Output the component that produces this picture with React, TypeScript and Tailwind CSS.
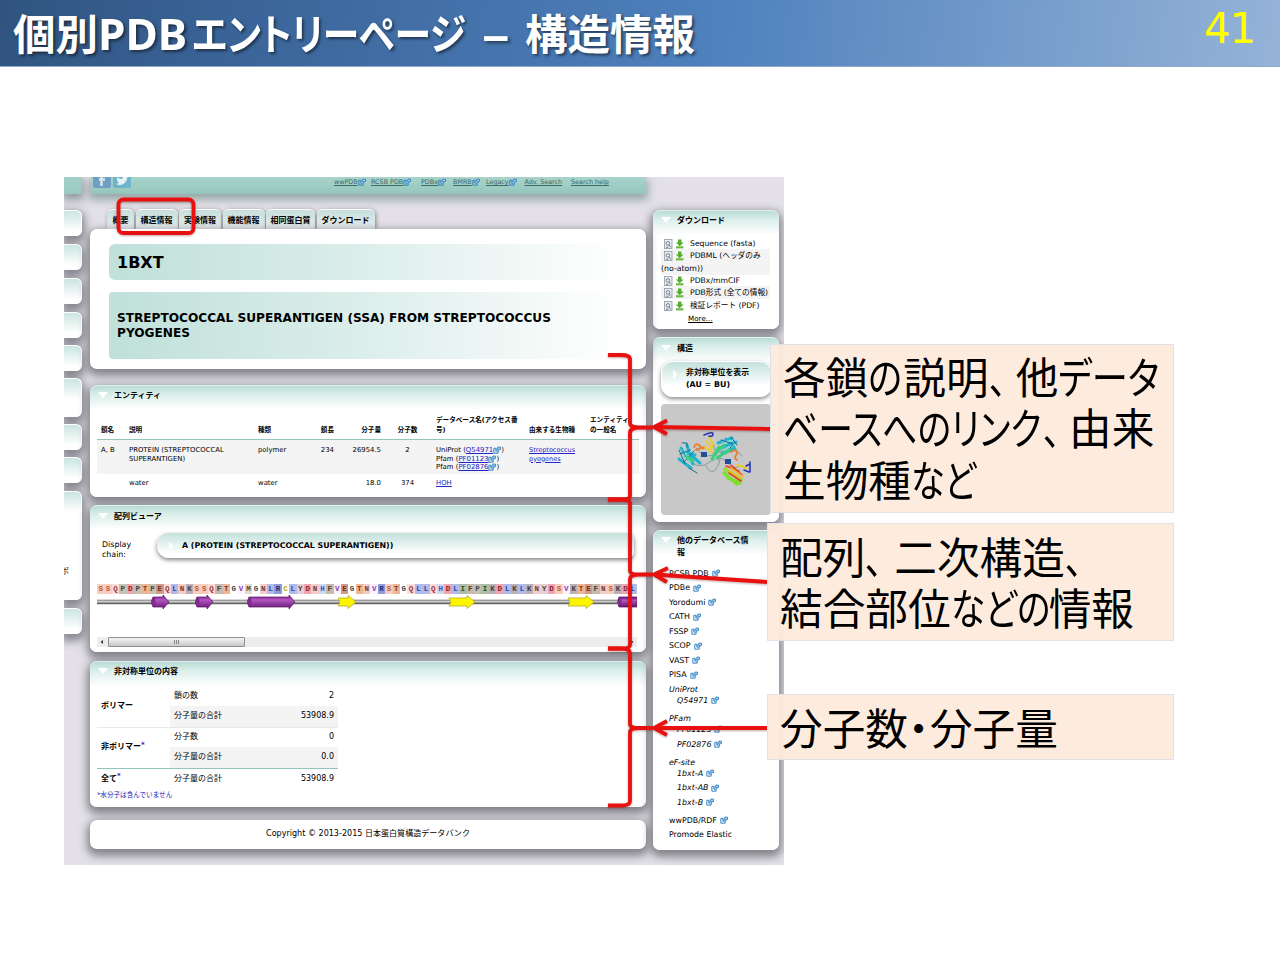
import React from "react";

const FONT = "font-['DejaVu_Sans','Noto_Sans_CJK_JP',sans-serif]";
const SLIDE_FONT = "font-['Noto_Sans','Noto_Sans_CJK_JP',sans-serif]";
const PANEL = "shrink-0 rounded-[7px] bg-white shadow-[0_4px_9px_3px_rgba(70,70,78,0.6)]";
const HEADED = "bg-[linear-gradient(to_bottom,#b9dcd5_0px,#dcefeb_9px,#ffffff_24px)] border-t border-[#dff1ee]";

function Ext({ className = "" }: { className?: string }) {
  return (
    <svg className={`inline-block h-[8px] w-[8px] shrink-0 ${className}`} viewBox="0 0 14 14" fill="none" stroke="#2c7fc4" strokeWidth="1.7">
      <path d="M6 4H1.5V12.500H9V10" />
      <path d="M5 9V5.500H8.500V2H13V6H10V9Z" fill="#cfe6f8" />
    </svg>
  );
}

function Heading({ children, className = "" }: { children: React.ReactNode; className?: string }) {
  return (
    <div className={`flex items-start gap-[6px] pl-[8px] text-[8px] leading-[12px] font-bold ${className}`}>
      <svg className="mt-[2px] h-[6px] w-[10px] shrink-0" viewBox="0 0 10 6"><path d="M0 0H10L5 6Z" fill="#fff" /></svg>
      <span>{children}</span>
    </div>
  );
}

const STUBS = [
  "h-[26px]", "mt-[8px] h-[26px]", "mt-[8px] h-[26px]", "mt-[8px] h-[26px]", "mt-[7px] h-[26px]",
  "mt-[7px] h-[39px]", "mt-[7px] h-[26px]", "mt-[7px] h-[26px]", "mt-[8px] h-[109px]", "mt-[8px] h-[26px]",
];

function LeftColumn() {
  return (
    <div className="flex w-[18px] shrink-0 flex-col">
      <div className="h-[17px] shrink-0 bg-gradient-to-b from-[#a3d0c8] to-[#9bcac1] shadow-[0_4px_8px_2px_rgba(90,110,110,0.6)]" />
      <div className="mt-[16px] flex flex-col">
        {STUBS.map((s, i) => (
          <div key={i} className={`${s} shrink-0 rounded-r-[6px] border-t border-r border-white bg-[linear-gradient(to_bottom,#cbe5e0_0px,#ffffff_20px)] shadow-[0_4px_8px_3px_rgba(75,75,85,0.6)]`}>
            {i === 8 && <div className="flex w-[5px] justify-end overflow-hidden pt-[74px] text-[8px] leading-[12px]"><span>ポ</span></div>}
          </div>
        ))}
      </div>
    </div>
  );
}

const LINKS: [string, boolean, string][] = [
  ["wwPDB", true, "w-[37px]"], ["RCSB PDB", true, "w-[50px]"], ["PDBe", true, "w-[32px]"], ["BMRB", true, "w-[33px]"],
  ["Legacy", true, "w-[38.5px]"], ["Adv. Search", false, "w-[46.5px]"], ["Search help", false, "w-[45px]"],
];

function TopBand() {
  return (
    <div className="ml-[1px] flex h-[17px] shrink-0 items-start bg-gradient-to-b from-[#a8d3cb] to-[#94c6bc] shadow-[0_4px_8px_2px_rgba(90,120,116,0.55)]">
      <div className="flex h-[12px] w-[243px] gap-[2px] pl-[2px]">
        <svg className="h-[11px] w-[18px]" viewBox="0 0 18 11"><path d="M0 0H18V9Q18 11 16 11H2Q0 11 0 9Z" fill="#6e9fc0" /><path d="M8.5 9V0M6 2.5H12" stroke="#d7e9ee" strokeWidth="2.4" /></svg>
        <svg className="h-[11px] w-[18px]" viewBox="0 0 18 11"><path d="M0 0H18V9Q18 11 16 11H2Q0 11 0 9Z" fill="#6fb4ca" /><path d="M3 7Q7 9 10 7Q14 5 14 1L15 0H10L9 2Q6 2 4 0V3L5 5Q6 6 6 6Z" fill="#e6f3f5" /></svg>
      </div>
      {LINKS.map(([t, ext, w]) => (
        <div key={t} className={`${w} flex items-center text-[6.4px] leading-[10px] whitespace-nowrap text-[#3f6a66]`}>
          <span className="underline">{t}</span>{ext && <Ext />}
        </div>
      ))}
    </div>
  );
}

const TABS: [string, string][] = [
  ["概要", "w-[27px]"], ["構造情報", "w-[42px]"], ["実験情報", "w-[42px]"], ["機能情報", "w-[42px]"], ["相同蛋白質", "w-[49px]"], ["ダウンロード", "w-[58px]"],
];

function Tabs() {
  return (
    <div className="mt-[15px] flex h-[20px] shrink-0 gap-[1.5px] pl-[17px]">
      {TABS.map(([t, w]) => (
        <div key={t} className={`${w} flex items-center justify-center rounded-t-[6px] border-t border-white bg-gradient-to-b from-[#c6dfdc] to-[#e9eeef] pt-[2px] text-[8px] font-bold whitespace-nowrap shadow-[1px_1px_4px_rgba(70,70,80,0.6)]`}>{t}</div>
      ))}
    </div>
  );
}

function TitlePanel() {
  const bar = "bg-gradient-to-r from-[#c0e0da] via-[#dceeeb] to-white flex items-center pl-[8px] font-bold";
  return (
    <div className={`${PANEL} relative flex h-[140px] flex-col pt-[15px] pl-[19px]`}>
      <div className={`${bar} h-[36px] w-[510px] rounded-l-[6px] pt-[1px] text-[16px]`}>1BXT</div>
      <div className={`${bar} mt-[12px] h-[67px] w-[510px] rounded-l-[4px] text-[12.130px] leading-[15px]`}>
        <div className="whitespace-nowrap">STREPTOCOCCAL SUPERANTIGEN (SSA) FROM STREPTOCOCCUS<br />PYOGENES</div>
      </div>
    </div>
  );
}

const COLS = "grid grid-cols-[28px_129px_48px_28px_47px_55px_93px_61px_48px] pl-[4px]";
const LINK = "text-[#2323c8] underline";

function EntityPanel() {
  const db: [string, string][] = [["UniProt", "Q54971"], ["Pfam", "PF01123"], ["Pfam", "PF02876"]];
  return (
    <div className={`${PANEL} ${HEADED} mt-[16px] flex h-[112px] flex-col`}>
      <Heading className="pt-[4px]">エンティティ</Heading>
      <div className="mx-[7px] mt-[12px] text-[6.900px]">
        <div className={`${COLS} h-[26px] items-end border-b border-[#94c4ba] pb-[4px] text-[6.6px] leading-[10px] font-bold whitespace-nowrap`}>
          <div>鎖名</div><div>説明</div><div>種類</div><div className="text-right">鎖長</div><div className="text-right">分子量</div>
          <div className="pr-[2px] text-center">分子数</div><div>データベース名(アクセス番<br />号)</div><div>由来する生物種</div><div>エンティティ<br />の一般名</div>
        </div>
        <div className={`${COLS} h-[34px] bg-[#f4f4f5] pt-[6px] leading-[8.5px]`}>
          <div>A, B</div><div>PROTEIN (STREPTOCOCCAL<br />SUPERANTIGEN)</div><div>polymer</div><div className="text-right">234</div><div className="text-right">26954.5</div>
          <div className="pr-[2px] text-center">2</div>
          <div>
            {db.map(([n, id]) => (
              <div key={id} className="flex h-[8.5px] items-center whitespace-nowrap">{n}&nbsp;(<span className={LINK}>{id}</span><Ext />)</div>
            ))}
          </div>
          <div className="text-[6.5px]"><span className={LINK}>Streptococcus<br />pyogenes</span></div><div />
        </div>
        <div className={`${COLS} h-[19px] items-center`}>
          <div /><div>water</div><div>water</div><div /><div className="text-right">18.0</div><div className="pr-[2px] text-center">374</div><div className={LINK}>HOH</div><div /><div />
        </div>
      </div>
    </div>
  );
}

const SEQ = "SSQPDPTPEQLNKSSQFTGVMGNLRCLYDNHFVEGTNVRSTGQLLQHDLIFPIKDLKLKNYDSVKTEFNSKDL";
const RESIDUE: Record<string, string> = {
  S: "bg-[#f9cdbd] text-[#b4573c]", T: "bg-[#f0b593] text-[#7a3d20]", Q: "bg-[#fbdcd8] text-[#9b3434]", P: "bg-[#c3c2b4] text-[#4a4640]",
  D: "bg-[#efa5b0] text-[#7c2430]", E: "bg-[#cf9c8c] text-[#6d2c20]", L: "bg-[#b0bbec] text-[#3844a4]", N: "bg-[#f4cdc6] text-[#7b3a34]",
  K: "bg-[#b9b0b8] text-[#4b3a44]", F: "bg-[#c9b8ae] text-[#4a4036]", G: "bg-white text-[#444]", V: "bg-[#fbf3fc] text-[#8d35b5]",
  M: "bg-[#e3dbc8] text-[#564b33]", R: "bg-[#8f9bd8] text-[#222a70]", C: "bg-white text-[#b5a800]", Y: "bg-[#e4d0d4] text-[#5c3a40]",
  H: "bg-[#cdd7f6] text-[#4656b6]", I: "bg-[#a9bfa6] text-[#2d4a2c]",
};

function Helix({ x, w, cut = false }: { x: number; w: number; cut?: boolean }) {
  const e = x + w;
  return (
    <g>
      <path d={cut ? `M${x + 2} 7H${e}V17H${x + 2}Q${x - 1} 12 ${x + 2} 7Z` : `M${x + 2} 7H${e - 6}V5L${e} 12L${e - 6} 19V17H${x + 2}Q${x - 1} 12 ${x + 2} 7Z`} fill="url(#helix)" stroke="#5b1266" strokeWidth=".7" />
      <ellipse cx={x + 2.5} cy="12" rx="2" ry="4.6" fill="#7d2a8a" />
    </g>
  );
}

function Strand({ x, w }: { x: number; w: number }) {
  const e = x + w;
  return <path d={`M${x} 8H${e - 8}V5.5L${e} 12L${e - 8} 18.5V16H${x}L${x + 2} 12Z`} fill="#fdf500" stroke="#b9ae1e" strokeWidth=".8" />;
}

function SequencePanel() {
  return (
    <div className={`${PANEL} ${HEADED} mt-[8px] flex h-[147px] flex-col`}>
      <Heading className="pt-[5px]">配列ビューア</Heading>
      <div className="mt-[7px] flex h-[36px] pl-[12px]">
        <div className="w-[54px] pt-[10px] text-[7.9px] leading-[10px]">Display<br />chain:</div>
        <div className="mt-[3px] ml-[1px] flex h-[25px] w-[477px] items-center gap-[8px] rounded-l-[12px] rounded-r-[6px] bg-gradient-to-b from-[#c3e1dc] to-white to-80% pl-[12px] text-[7.860px] font-bold whitespace-nowrap shadow-[0_2px_4px_rgba(60,60,60,0.65)]">
          <svg className="h-[8px] w-[5px]" viewBox="0 0 5 8"><path d="M0 0L5 4L0 8Z" fill="#fff" /></svg>
          A (PROTEIN (STREPTOCOCCAL SUPERANTIGEN))
        </div>
      </div>
      <div className="mt-[17.5px] ml-[7px] flex h-[10px] w-[540px] font-['Liberation_Mono',monospace] text-[7.5px] leading-[10px] font-bold">
        {SEQ.split("").map((c, i) => <span key={i} className={`${RESIDUE[c]} w-[7.4px] shrink-0 text-center`}>{c}</span>)}
      </div>
      <svg className="-mt-[4px] ml-[7px] h-[24px] w-[540px]" viewBox="0 0 540 24">
        <defs><linearGradient id="helix" x2="0" y2="1"><stop offset="0" stopColor="#6d1b7c" /><stop offset=".35" stopColor="#b455c2" /><stop offset="1" stopColor="#5f146c" /></linearGradient></defs>
        <path d="M0 12H520" stroke="#666" strokeWidth="4.4" /><path d="M0 11.6H520" stroke="#cfcfcf" strokeWidth="2" />
        <Helix x={54} w={18} /><Helix x={98} w={18} /><Helix x={150} w={48} />
        <Strand x={241} w={18} /><Strand x={352} w={26} /><Strand x={471} w={26} />
        <Helix x={520} w={20} cut />
      </svg>
      <div className="mt-[23px] ml-[7px] flex h-[10px] w-[540px] items-center bg-[#ededed]">
        <svg className="h-[10px] w-[11px]" viewBox="0 0 11 10"><path d="M6 3V7L3.5 5Z" fill="#333" /></svg>
        <div className="flex h-[10px] w-[137px] items-center justify-center gap-[1px] rounded-[1px] border border-[#8f8f8f] bg-gradient-to-b from-[#f5f5f5] to-[#c9c9c9]">
          <i className="h-[4px] w-px bg-[#888]" /><i className="h-[4px] w-px bg-[#888]" /><i className="h-[4px] w-px bg-[#888]" />
        </div>
        <svg className="ml-auto h-[10px] w-[8px]" viewBox="0 0 8 10"><path d="M2 3V7L4.5 5Z" fill="#333" /></svg>
      </div>
    </div>
  );
}

function ContentPanel() {
  const row = "flex h-[20.5px] items-center justify-between pr-[4px] pl-[4px]";
  const side = "flex w-[73px] items-center pl-[4px] font-bold";
  const star = <span className="-mt-[5px] text-[7px] text-[#2323a8]">*</span>;
  return (
    <div className={`${PANEL} ${HEADED} mt-[9px] flex h-[146px] flex-col text-[8px]`}>
      <Heading className="pt-[4px]">非対称単位の内容</Heading>
      <div className="mt-[7.5px] ml-[7px] w-[241px] leading-[10px]">
        <div className="flex border-b border-[#e8e8ea]">
          <div className={side}>ポリマー</div>
          <div className="flex-1"><div className={row}><span>鎖の数</span><span>2</span></div><div className={`${row} bg-[#f4f4f5]`}><span>分子量の合計</span><span>53908.9</span></div></div>
        </div>
        <div className="-mt-px flex border-b border-[#94c4ba]">
          <div className={side}>非ポリマー{star}</div>
          <div className="flex-1"><div className={row}><span>分子数</span><span>0</span></div><div className={`${row} bg-[#f4f4f5]`}><span>分子量の合計</span><span>0.0</span></div></div>
        </div>
        <div className="flex">
          <div className={side}>全て{star}</div>
          <div className={`${row} flex-1`}><span>分子量の合計</span><span>53908.9</span></div>
        </div>
        <div className="mt-[1px] text-[6.6px] text-[#2424b8]">*水分子は含んでいません</div>
      </div>
    </div>
  );
}

const DOWNLOADS: [string, string][] = [
  ["Sequence (fasta)", "h-[11px]"], ["PDBML (ヘッダのみ", "h-[13px] bg-[#f4f4f5]"], ["", "h-[13px] bg-[#f4f4f5]"],
  ["PDBx/mmCIF", "h-[11px]"], ["PDB形式 (全ての情報)", "h-[13px] bg-[#f4f4f5]"], ["検証レポート (PDF)", "h-[13px]"],
];

function DownloadIcons() {
  return (
    <svg className="h-[10px] w-[20px] shrink-0" viewBox="0 0 20 10">
      <rect x=".5" y=".5" width="7.5" height="9" fill="#e9edf2" stroke="#8d99a8" strokeWidth=".8" />
      <circle cx="4" cy="4.4" r="1.8" fill="none" stroke="#6a7686" strokeWidth=".9" /><path d="M5 6L7 8.4M2 8.2H4.5" stroke="#6a7686" />
      <path d="M14 .6H17.4V3.6H19.6L15.7 7.2L11.8 3.6H14Z" fill="#56ab2c" /><path d="M12 7.2H19.4V9.4H12Z" fill="#6db944" />
    </svg>
  );
}

function Protein() {
  return (
    <svg className="h-[60px] w-[80px]" viewBox="0 0 80 60" fill="none" strokeLinecap="round" strokeLinejoin="round">
      <g strokeWidth="1" stroke="#8c9aa0"><path d="M8 26Q22 42 34 32T56 38L66 36M20 18Q30 32 43 22T66 26M36 12L43 31M30 36Q38 50 44 30" /></g>
      <g stroke="#22b4cf" strokeWidth="3"><path d="M5 18L13 30M11 15L17 34M3 29L15 38M17 27L24 33M7 22L19 25" /><path d="M42 13L56 8M44 18L60 12M50 9L58 17M46 23L59 19" /></g>
      <g stroke="#7adbe6" strokeWidth="1.6"><path d="M8 19L14 33M6 27L18 31M47 12L59 10M48 20L57 15" /></g>
      <g stroke="#166b84" strokeWidth="1"><path d="M6 13H11V17M4 24L14 20M13 38L21 43M8 32L18 21M45 10L57 14L50 24M3 20L9 34M55 7L61 15" /></g>
      <g stroke="#39d17a" strokeWidth="3"><path d="M38 24L48 15M41 28L53 20M11 27L17 31M36 29L43 17" /></g>
      <g stroke="#e9822c" strokeWidth="1.9"><path d="M18 17Q20 12 24 16T28 17M55 22Q61 18 61 24Q57 28 61 30M20 20L25 18" /></g>
      <g stroke="#edcd28" strokeWidth="1.9"><path d="M30 11L35 17M29 17L36 22M61 35L71 38M33 8Q39 14 34 21" /></g>
      <g stroke="#2936b0" strokeWidth="1.6"><path d="M28 5Q37 1 37 4T33 6M70 36L74 34M74 32V42M68 40L73 42" /></g>
      <path d="M25 22H31V27H25ZM49 29H55V34H49Z" fill="#1f4f96" />
      <g stroke="#7ae02c" strokeWidth="3.4"><path d="M49 39L65 50M48 43L61 54M52 48L64 53" /></g>
      <g stroke="#e6402a" strokeWidth="1.6"><path d="M50 36L63 41M55 35L66 45M53 43L65 51" /></g>
      <g stroke="#f0bd25" strokeWidth="1.6"><path d="M50 39L64 48M55 38L67 47" /></g>
    </svg>
  );
}

const DB_LINKS: [string, boolean, string][] = [
  ["RCSB PDB", true, ""], ["PDBe", true, "mt-[3.5px]"], ["Yorodumi", true, "mt-[3.5px]"], ["CATH", true, "mt-[3.5px]"], ["FSSP", true, "mt-[3.5px]"],
  ["SCOP", true, "mt-[3.5px]"], ["VAST", true, "mt-[3.5px]"], ["PISA", true, "mt-[3.5px]"], ["UniProt", false, "mt-[3.5px] italic"],
  ["Q54971", true, "pl-[8px] italic"], ["PFam", false, "mt-[7px] italic"], ["PF01123", true, "pl-[8px] italic"], ["PF02876", true, "mt-[4px] pl-[8px] italic"],
  ["eF-site", false, "mt-[7px] italic"], ["1bxt-A", true, "pl-[8px] italic"], ["1bxt-AB", true, "mt-[3.5px] pl-[8px] italic"], ["1bxt-B", true, "mt-[3.5px] pl-[8px] italic"],
  ["wwPDB/RDF", true, "mt-[7px]"], ["Promode Elastic", false, "mt-[3px]"],
];

function Sidebar() {
  return (
    <div className="mt-[33px] ml-[7px] flex w-[126px] shrink-0 flex-col text-[7.8px]">
      <div className={`${PANEL} ${HEADED} flex h-[119px] flex-col`}>
        <Heading className="pt-[4px]">ダウンロード</Heading>
        <div className="mt-[11px] mr-[9px] ml-[8px]">
          {DOWNLOADS.map(([t, h]) => (
            <div key={t} className={`${h} flex items-center whitespace-nowrap`}>
              {t ? <><span className="w-[29px] pl-[3px]"><DownloadIcons /></span><span className="text-[7.7px] leading-[11px]">{t}</span></> : <span>(no-atom))</span>}
            </div>
          ))}
          <div className="pl-[27px] text-[7.2px] leading-[14px] underline">More...</div>
        </div>
      </div>
      <div className={`${PANEL} ${HEADED} mt-[8px] flex h-[185px] flex-col`}>
        <Heading className="pt-[5px]">構造</Heading>
        <div className="mt-[6px] ml-[8px] flex h-[36px] w-[111px] items-center gap-[8px] rounded-[12px] border border-white bg-gradient-to-b from-[#c3e1dc] to-white to-70% pl-[11px] text-[7.9px] leading-[12px] font-bold whitespace-nowrap shadow-[0_2px_4px_rgba(60,60,60,0.6)]">
          <svg className="-mt-[10px] h-[9px] w-[5px]" viewBox="0 0 5 9"><path d="M0 0L5 4.5L0 9Z" fill="#fff" /></svg>
          <span>非対称単位を表示<br />(AU = BU)</span>
        </div>
        <div className="mt-[7px] ml-[8px] flex h-[111px] w-[110px] items-center justify-center rounded-[4px] bg-[#c8c8c8]"><Protein /></div>
      </div>
      <div className={`${PANEL} ${HEADED} mt-[8px] flex h-[320px] flex-col`}>
        <Heading className="w-[100px] pt-[4px]">他のデータベース情報</Heading>
        <div className="mt-[8.5px] pl-[16px] text-[7.9px] leading-[11px]">
          {DB_LINKS.map(([t, ext, c]) => (
            <div key={t} className={`${c} flex h-[11px] items-center gap-[3px] whitespace-nowrap`}>{t}{ext && <Ext />}</div>
          ))}
        </div>
      </div>
    </div>
  );
}

function Annotations() {
  return (
    <svg className="pointer-events-none absolute top-0 left-0 h-[960px] w-[1280px] drop-shadow-[0_1px_1px_rgba(80,0,0,0.35)]" viewBox="0 0 1280 960" fill="none" stroke="#e8110f" strokeWidth="3.8">
      <rect x="118.500" y="199.500" width="75" height="33.500" rx="5" />
      <path d="M608 355H621Q630 355 630 359V423Q630 427 639 427.500H652M639 427.500Q630 427.500 630 433V496Q630 499.500 622 499.500H608" />
      <path d="M608 499.500H621Q630 499.500 630 503V571Q630 574.500 639 574.500H652M639 574.500Q630 574.500 630 579V645Q630 648.500 621 648.500H608" />
      <path d="M608 648.500H621Q630 648.500 630 653V724Q630 728 639 728H652M639 728Q630 728 630 732V801Q630 805.500 621 805.500H608" />
      <path d="M771 429L655 427M667 420.500L654 427L667 434" />
      <path d="M768 582L655 574.500M668 568L654 574.500L667 582" />
      <path d="M768 728H655M667 721L654 728L667 735" />
    </svg>
  );
}

const CALLOUT = "absolute border border-[#dfe2ea] bg-[#fdeadd]/[0.96] text-[42.67px] leading-[51.3px] text-black whitespace-nowrap";

/** Condensed kana run set in a slot of fixed width. */
function Kana({ children, w, scale = "scale-x-[0.825]" }: { children: string; w: string; scale?: string }) {
  return (
    <span className={`${w} shrink-0`}>
      <span className={`${scale} inline-block origin-left [font-feature-settings:'palt']`}>{children}</span>
    </span>
  );
}

export default function App() {
  return (
    <div className="relative flex h-[960px] w-[1280px] flex-col overflow-hidden bg-white text-black">
      <header className={`${SLIDE_FONT} flex h-[67px] shrink-0 items-center justify-between border-b border-[#8fa9ca] bg-[linear-gradient(97deg,#30547f_0%,#3b659a_20%,#4f81bd_56%,#95b3d7_100%)] pr-[25px] pl-[13px] leading-none`}>
        <h1 className="mt-[2px] flex items-center text-[42.5px] font-bold whitespace-nowrap text-white [text-shadow:2px_2px_3px_rgba(0,0,0,0.5)]">
          <span className="w-[85px]">個別</span><span className="w-[94px]"><span className="inline-block origin-left scale-x-[1.04]">PDB</span></span>
          <Kana w="w-[290px]" scale="scale-x-[0.865]">エントリーページ</Kana>
          <span className="w-[43px]"><span className="inline-block origin-left scale-x-[1.3]">–</span></span><span>構造情報</span>
        </h1>
        <span className="-mt-[9px] font-['DejaVu_Sans',sans-serif] text-[42px] tracking-[-1.2px] text-[#ffff00]">41</span>
      </header>
      <main className={`${FONT} mt-[110px] ml-[64px] flex h-[688px] w-[720px] shrink-0 overflow-hidden bg-[#e3e1e7]`}>
        <LeftColumn />
        <div className="ml-[8px] flex w-[556px] shrink-0 flex-col">
          <TopBand />
          <Tabs />
          <TitlePanel />
          <EntityPanel />
          <SequencePanel />
          <ContentPanel />
          <div className={`${PANEL} mt-[13px] flex h-[29px] items-center justify-center text-[8.050px]`}>Copyright © 2013-2015 日本蛋白質構造データバンク</div>
        </div>
        <Sidebar />
      </main>
      <Annotations />
      <div className={`${SLIDE_FONT} ${CALLOUT} top-[344px] left-[770px] h-[169px] w-[404px] pt-[7px] pl-[12px]`}>
        <div className="flex h-[51.3px]"><span>各鎖</span><Kana w="w-[35px]">の</Kana><span>説明</span><Kana w="w-[27px]">、</Kana><span>他</span><Kana w="w-[104px]" scale="scale-x-[0.85]">データ</Kana></div>
        <div className="flex h-[51.3px]"><Kana w="w-[260px]" scale="scale-x-[0.815]">ベースへのリンク</Kana><Kana w="w-[26px]">、</Kana><span>由来</span></div>
        <div className="flex h-[51.3px]"><span>生物種</span><Kana w="w-[66px]" scale="scale-x-[0.8]">など</Kana></div>
      </div>
      <div className={`${SLIDE_FONT} ${CALLOUT} top-[523px] left-[767px] h-[118px] w-[407px] pt-[7.5px] pl-[12px]`}>
        <div className="flex h-[51.3px]"><span>配列</span><Kana w="w-[29px]">、</Kana><span>二次構造</span><Kana w="w-[29px]">、</Kana></div>
        <div className="flex h-[51.3px]"><span>結合部位</span><Kana w="w-[98px]" scale="scale-x-[0.81]">などの</Kana><span>情報</span></div>
      </div>
      <div className={`${SLIDE_FONT} ${CALLOUT} top-[694px] left-[767px] h-[66px] w-[407px] pt-[7.5px] pl-[12px]`}>
        <div className="flex h-[51.3px]"><span>分子数</span><Kana w="w-[22px]" scale="scale-x-100">・</Kana><span>分子量</span></div>
      </div>
    </div>
  );
}
